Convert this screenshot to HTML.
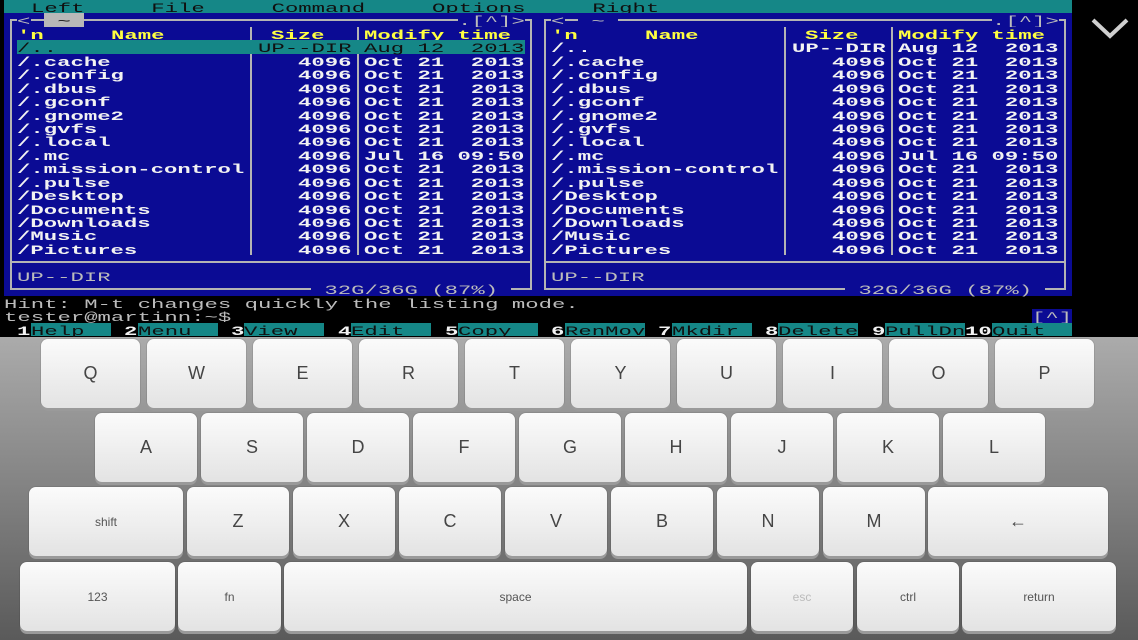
<!DOCTYPE html>
<html><head><meta charset="utf-8"><style>
html,body{margin:0;padding:0;}
body{width:1138px;height:640px;overflow:hidden;background:#000;position:relative;font-family:"Liberation Mono",monospace;}
.t{position:absolute;font-size:13.3px;line-height:13.44px;height:13.44px;white-space:pre;transform:scaleX(1.675);transform-origin:0 0;}
.r{position:absolute;}
.w{color:#f2f2f2;font-weight:bold}
.g{color:#bcbcbc}
.y{color:#ffff40;font-weight:bold}
.k{color:#101010}
#kb{position:absolute;left:0;top:337px;width:1138px;height:303px;background:linear-gradient(#ababab,#5a5a5a);}
.key{position:absolute;border-radius:7px;background:linear-gradient(#fbfbfb,#e3e3e3);box-shadow:0 3px 0 #9a9a9a,0 0 0 1px rgba(0,0,0,0.08);font-family:"Liberation Sans",sans-serif;color:#454545;display:flex;align-items:center;justify-content:center;font-size:18px;}
.key.s{font-size:12px;color:#555}
</style></head><body>
<div id="term"></div>
<svg style="position:absolute;left:1085px;top:12px" width="50" height="32"><path d="M8 8 L25 24 L42 8" stroke="#cfcfcf" stroke-width="4" fill="none"/></svg>
<div id="kb"></div>
<script>
var T=document.getElementById('term');
var CW=13.35,RH=13.44,OX=4;
function rect(x,y,w,h,c){var d=document.createElement('div');d.className='r';d.style.cssText='left:'+x+'px;top:'+y+'px;width:'+w+'px;height:'+h+'px;background:'+c;T.appendChild(d);}
function bg(c,r,n,col){rect(OX+c*CW,r*RH,n*CW,RH,col);}
function put(c,r,s,cls){var d=document.createElement('div');d.className='t '+cls;d.style.left=(OX+c*CW)+'px';d.style.top=(r*RH+2)+'px';d.textContent=s;T.appendChild(d);}
var BLUE='#0b0b94',TEAL='#158787',LINE='#b4b4b4';
rect(OX,0,1068,RH,TEAL);
put(2,0,'Left     File     Command     Options     Right','k');
rect(OX,RH,1068,21*RH,BLUE);
var names=['/..','/.cache','/.config','/.dbus','/.gconf','/.gnome2','/.gvfs','/.local','/.mc','/.mission-control','/.pulse','/Desktop','/Documents','/Downloads','/Music','/Pictures'];
[0,40].forEach(function(o){
  var x0=OX+(o+0.5)*CW-1,x1=OX+(o+39.5)*CW-1;
  var yt=1.5*RH-1,yb=21.5*RH-1;
  rect(x0,yt,2,yb-yt+2,LINE);rect(x1,yt,2,yb-yt+2,LINE);
  rect(x0,yt,x1-x0+2,2,LINE);rect(x0,yb,x1-x0+2,2,LINE);
  rect(x0,19.5*RH-1,x1-x0+2,2,LINE);
  [18,26].forEach(function(c){rect(OX+(o+c+0.5)*CW-1,2*RH,2,17*RH,LINE);});
  bg(o+1,1,1,BLUE);put(o+1,1,'<','g');
  if(o==0){bg(3,1,3,'#b8b8b8');put(3,1,' ~ ','k');}else{bg(43,1,3,BLUE);put(43,1,' ~ ','g');}
  bg(o+34,1,5,BLUE);put(o+34,1,'.[^]>','g');
  bg(o+1,2,17,BLUE);bg(o+19,2,7,BLUE);bg(o+27,2,12,BLUE);
  put(o+1,2,"'n",'y');put(o+8,2,'Name','y');put(o+20,2,'Size','y');put(o+27,2,'Modify time','y');
  for(var i=0;i<names.length;i++){
    var r=3+i,cls='w';
    if(i==0&&o==0){bg(1,3,38,TEAL);cls='k';}
    put(o+1,r,names[i],cls);
    if(i==0){put(o+19,r,'UP--DIR',cls);put(o+27,r,'Aug 12  2013',cls);}
    else if(names[i]=='/.mc'){put(o+22,r,'4096',cls);put(o+27,r,'Jul 16 09:50',cls);}
    else{put(o+22,r,'4096',cls);put(o+27,r,'Oct 21  2013',cls);}
  }
  put(o+1,20,'UP--DIR','g');
  bg(o+23,21,15,BLUE);put(o+23,21,' 32G/36G (87%) ','g');
});
put(0,22,'Hint: M-t changes quickly the listing mode.','g');
put(0,23,'tester@martinn:~$','g');
bg(77,23,3,BLUE);put(77,23,'[^]','g');
var fk=['Help','Menu','View','Edit','Copy','RenMov','Mkdir','Delete','PullDn'];
for(var i=0;i<9;i++){var c=8*i+1;put(c,24,String(i+1),'w');bg(c+1,24,6,TEAL);put(c+1,24,fk[i],'k');}
put(72,24,'10','w');bg(74,24,6,TEAL);put(74,24,'Quit','k');

var KB=document.getElementById('kb');
function key(x,y,w,h,l,s){var d=document.createElement('div');d.className='key'+(s?' s':'');d.style.cssText+='left:'+x+'px;top:'+(y-337)+'px;width:'+w+'px;height:'+h+'px;';d.textContent=l;KB.appendChild(d);}
'QWERTYUIOP'.split('').forEach(function(c,i){key(41+i*106,339,99,69,c);});
'ASDFGHJKL'.split('').forEach(function(c,i){key(95+i*106,413,102,69,c);});
key(29,487,154,69,'shift',1);
var r3=[[187,'Z'],[293,'X'],[399,'C'],[505,'V'],[611,'B'],[717,'N'],[823,'M']];
r3.forEach(function(a){key(a[0],487,102,69,a[1]);});
key(928,487,180,69,'←');
key(20,562,155,69,'123',1);key(178,562,103,69,'fn',1);key(284,562,463,69,'space',1);
key(751,562,102,69,'esc',1);key(857,562,102,69,'ctrl',1);key(962,562,154,69,'return',1);
KB.lastChild.previousSibling.previousSibling.style.color='#bbb';
</script>
</body></html>
